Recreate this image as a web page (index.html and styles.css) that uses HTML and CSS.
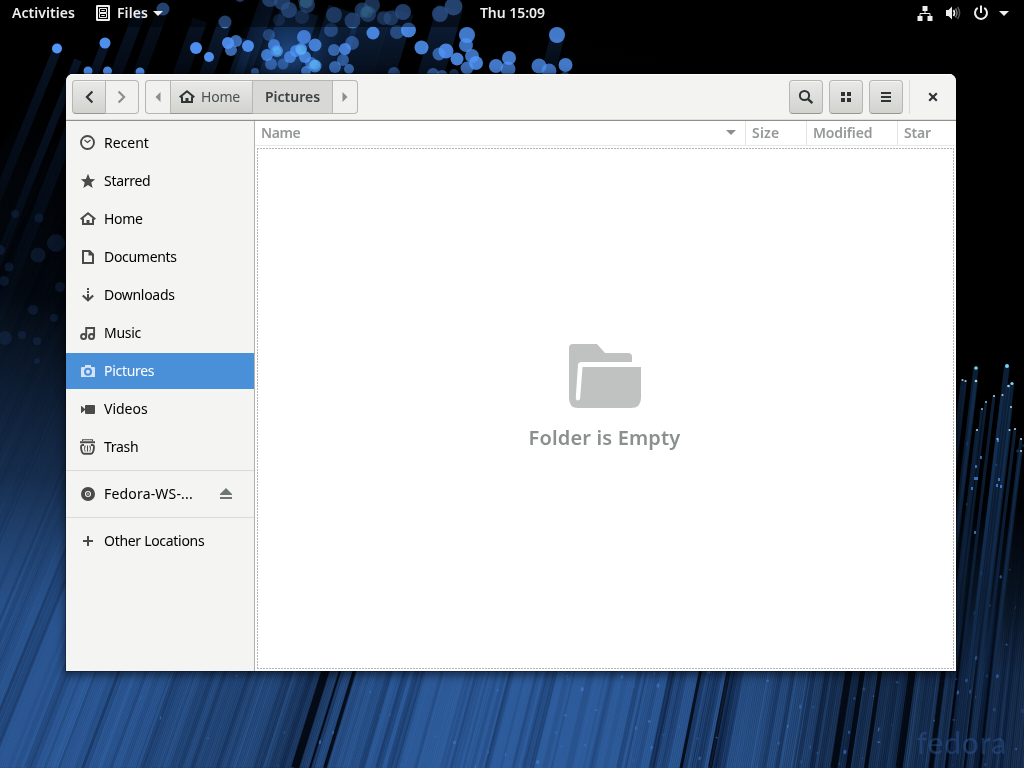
FILE: index.html
```html
<!DOCTYPE html>
<html lang="en">
<head>
<meta charset="utf-8">
<title>Files</title>
<link rel="stylesheet" href="styles.css">
</head>
<body>
<canvas class="wallpaper" id="wallpaper" width="1024" height="768"></canvas>
<span class="brand">fedora</span>

<svg class="defs" aria-hidden="true">
  <symbol id="home" viewBox="0 0 16 16"><path fill="none" stroke="currentColor" stroke-width="2" d="M.7 8.300 8 2.300l7.300 6M3 7.500V13h10V7.500"/><path fill="currentColor" d="M6.500 9h3v4.500h-3z"/></symbol>
</svg>

<header class="panel">
  <div class="panel-left">
    <span class="activities">Activities</span>
    <span class="app">
      <svg width="16" height="16" viewBox="0 0 16 16"><path fill="#eee" fill-rule="evenodd" d="M2.200 0h11.600Q15 0 15 1.200v13.600Q15 16 13.800 16H2.200Q1 16 1 14.800V1.200Q1 0 2.200 0zM3 2v12h10V2z"/><path fill="none" stroke="#eee" d="M4.500 3.500h7v4h-7zM4.500 8.500h7v4h-7zM6.500 6V5.500h3V6M6.500 11v-.5h3v.5"/></svg>
      <span class="app-name">Files</span>
      <svg class="app-arrow" width="10" height="5" viewBox="0 0 10 5"><path fill="#eee" d="M0 0h10L5 5z"/></svg>
    </span>
  </div>
  <span class="clock">Thu 15:09</span>
  <div class="status">
    <svg width="16" height="16" viewBox="0 0 16 16"><path fill="#eee" d="M5.500 1h5v5h-5zM.5 11h5v5h-5zM10.500 11h5v5h-5z"/><path fill="none" stroke="#eee" d="M8 6v3M3 11V8.500h10V11"/></svg>
    <svg width="16" height="16" viewBox="0 0 16 16"><path fill="#eee" d="M1 5h2.500L7 1.500v13L3.500 11H1z"/><path fill="none" stroke="#eee" stroke-width="1.600" d="M8.500 5q2 3 0 6"/><path fill="none" stroke="#777" stroke-width="1.500" d="M10.500 3.500q3 4.500 0 9"/><path fill="none" stroke="#555" stroke-width="1.500" d="M12.600 2q4 6 0 12"/></svg>
    <svg width="16" height="16" viewBox="0 0 16 16"><path fill="none" stroke="#eee" stroke-width="2" d="M4.700 2.900a6 6 0 1 0 6.600 0M8 .5V8"/></svg>
    <svg class="menu-arrow" width="10" height="5" viewBox="0 0 10 5"><path fill="#eee" d="M0 0h10L5 5z"/></svg>
  </div>
</header>

<main class="window">
  <header class="headerbar">
    <div class="group nav">
      <button class="btn raised"><svg width="16" height="16" viewBox="0 0 16 16"><path fill="none" stroke="#2e3436" stroke-width="2.200" d="M11.400 2.500 5.900 8l5.500 5.500"/></svg></button>
      <button class="btn flat"><svg width="16" height="16" viewBox="0 0 16 16"><path fill="none" stroke="#8b8e8f" stroke-width="2.200" d="M4.600 2.500 10.100 8l-5.500 5.500"/></svg></button>
    </div>
    <div class="group path">
      <button class="btn flat edge"><svg width="6" height="10" viewBox="0 0 6 10"><path fill="#8b8e8f" d="M5.500 0v10L.5 5z"/></svg></button>
      <button class="btn raised crumb-home"><svg width="16" height="16"><use href="#home"/></svg><span class="crumb">Home</span></button>
      <button class="btn current"><span class="crumb-bold">Pictures</span></button>
      <button class="btn flat edge"><svg width="6" height="10" viewBox="0 0 6 10"><path fill="#8b8e8f" d="M.5 0v10l5-5z"/></svg></button>
    </div>
    <div class="actions">
      <button class="btn raised single"><svg width="16" height="16" viewBox="0 0 16 16"><circle cx="6.500" cy="6.500" r="4.600" fill="none" stroke="#2e3436" stroke-width="2"/><path fill="none" stroke="#2e3436" stroke-width="2.400" d="m9.800 9.800 4.600 4.400"/></svg></button>
      <button class="btn raised single"><svg width="16" height="16" viewBox="0 0 16 16"><path fill="#2e3436" d="M3 3h4v4H3zM9 3h4v4H9zM3 9h4v4H3zM9 9h4v4H9z"/></svg></button>
      <button class="btn raised single"><svg width="16" height="16" viewBox="0 0 16 16"><path fill="#2e3436" d="M3 3h10v2H3zM3 7h10v2H3zM3 11h10v2H3z"/></svg></button>
      <i class="divider"></i>
      <button class="close"><svg width="16" height="16" viewBox="0 0 16 16"><path fill="none" stroke="#2e3436" stroke-width="2.200" d="m4.200 4.200 7.600 7.600M11.800 4.200l-7.600 7.600"/></svg></button>
    </div>
  </header>

  <div class="body">
    <nav class="sidebar">
      <a class="place"><svg width="16" height="16" viewBox="0 0 16 16"><circle cx="7.500" cy="7.500" r="6.500" fill="none" stroke="#4a4a48" stroke-width="1.900"/><path fill="none" stroke="#4a4a48" stroke-width="1.300" d="m4.500 5 3 2.500L10.500 5"/></svg><span class="wide">Recent</span></a>
      <a class="place"><svg width="16" height="16" viewBox="0 0 16 16"><path fill="#4a4a48" d="m8 .8 2.100 5.100 5.100.3-3.900 3.400L12.600 15 8 12.100 3.400 15l1.300-5.400L.8 6.200l5.100-.3z"/></svg><span>Starred</span></a>
      <a class="place"><svg width="16" height="16"><use href="#home"/></svg><span>Home</span></a>
      <a class="place"><svg width="16" height="16" viewBox="0 0 16 16"><path fill="none" stroke="#4a4a48" stroke-width="2" d="M3 2h6.500L13 5.500V14H3z"/><path fill="#4a4a48" d="M8.500 1.500V6.500H13.500L9.500 1.500z"/></svg><span>Documents</span></a>
      <a class="place"><svg width="16" height="16" viewBox="0 0 16 16"><path fill="#4a4a48" d="M7 1h2v2H7zM7 4h2v2H7zM7 7h2v5H7z"/><path fill="none" stroke="#4a4a48" stroke-width="2.200" d="m2.800 8.500 5.200 4.700 5.200-4.700"/></svg><span>Downloads</span></a>
      <a class="place"><svg width="16" height="16" viewBox="0 0 16 16"><path fill="none" stroke="#4a4a48" stroke-width="1.900" d="M6.200 11.500V3h7.900v8.500"/><circle cx="3.600" cy="11.400" r="2.500" fill="none" stroke="#4a4a48" stroke-width="2"/><circle cx="11.500" cy="11.400" r="2.500" fill="none" stroke="#4a4a48" stroke-width="2"/></svg><span>Music</span></a>
      <a class="place selected"><svg width="16" height="16" viewBox="0 0 16 16"><path fill="#d3e3f5" d="M5 2h6v2h3q1 0 1 1v9H1V5q0-1 1-1h3z"/><circle cx="8" cy="8.800" r="3" fill="none" stroke="#4a90d9" stroke-width="2"/></svg><span>Pictures</span></a>
      <a class="place"><svg width="16" height="16" viewBox="0 0 16 16"><path fill="#4a4a48" d="M6 4h8q1 0 1 1v7q0 1-1 1H6q-1 0-1-1V9l-3.500 3H1V5h.5L5 8V5q0-1 1-1z"/></svg><span class="wide">Videos</span></a>
      <a class="place"><svg width="16" height="16" viewBox="0 0 16 16"><path fill="none" stroke="#4a4a48" stroke-width="1.900" d="M0 3.200h15M1.500 6Q.4 9 2 13q.6 1.800 2 1.800h7q1.400 0 2-1.800 1.600-4 .5-7M1.500 6H4M11 6h2.500"/><path fill="none" stroke="#4a4a48" stroke-width="1.100" d="M2.500 2V.8h10V2M5.200 6.500q-1.400 3 0 6M9.800 6.500q1.400 3 0 6M7.500 6.500v6"/></svg><span>Trash</span></a>
      <hr class="rule">
      <a class="place"><svg width="16" height="16" viewBox="0 0 16 16"><circle cx="8" cy="8" r="7" fill="#4a4a48"/><circle cx="8" cy="8" r="2.500" fill="none" stroke="#f4f4f2" stroke-width="1.100"/><circle cx="8" cy="8" r=".8" fill="#f4f4f2"/></svg><span class="disc">Fedora-WS-...</span><svg class="eject" width="16" height="16" viewBox="0 0 16 16"><path fill="#6f7474" d="M8 2 14 8v1H2V8zM2 11h12v2H2z"/></svg></a>
      <hr class="rule">
      <a class="place"><svg width="16" height="16" viewBox="0 0 16 16"><path fill="#4a4a48" d="M7 3h2v4h4v2H9v4H7V9H3V7h4z"/></svg><span>Other Locations</span></a>
    </nav>

    <section class="content">
      <div class="columns">
        <div class="col name"><span>Name</span><svg width="10" height="5" viewBox="0 0 10 5"><path fill="#8b8e8f" d="M0 0h10L5 5z"/></svg></div>
        <div class="col size"><span>Size</span></div>
        <div class="col modified"><span>Modified</span></div>
        <div class="col star"><span>Star</span></div>
      </div>
      <div class="view">
        <svg width="72" height="64" viewBox="0 0 72 64"><path fill="#c0c2c1" d="M4 0h24l8 9h23q4 0 4 4v5H13q-4 0-4 3L6.800 53.500q0 3 2.100 3t2.300-3L13.500 23H72v31q0 10-10 10H9Q0 64 0 54V4q0-4 4-4z"/></svg>
        <p class="empty">Folder is Empty</p>
      </div>
    </section>
  </div>
</main>
<script src="wallpaper.js"></script>
</body>
</html>
```
FILE: styles.css
```css
* { box-sizing: border-box; }
body {
  margin: 0;
  width: 1024px;
  height: 768px;
  overflow: hidden;
  background: #000;
  font-family: "Noto Sans", "Open Sans", sans-serif;
  font-size: 14px;
  color: #000;
}
svg { display: block; flex: none; }
.defs { position: absolute; width: 0; height: 0; }
.wallpaper { position: absolute; top: 0; left: 0; z-index: -2; }
.brand {
  position: absolute;
  right: 17px;
  bottom: 9px;
  z-index: -1;
  font: 500 30px/34px "Lato", sans-serif;
  letter-spacing: 0.8px;
  color: rgba(44, 84, 146, 0.5);
}

/* Top panel */
.panel {
  display: grid;
  grid-template-columns: 1fr auto 1fr;
  align-items: center;
  height: 27px;
  padding: 0 15px 1px 16px;
  background: rgba(0, 0, 0, 0.45);
  color: #eee;
  font-weight: 600;
}
.panel span { padding-bottom: 1px; }
.panel .app { padding: 0; }
.panel-left, .app, .status { display: flex; align-items: center; }
.panel-left { gap: 20px; margin-left: -4px; }
.app { gap: 6px; }
.app-arrow { margin-left: -1px; }
.activities { letter-spacing: 0.05px; }
.app-name { letter-spacing: 0.1px; }
.clock { letter-spacing: -0.03px; }
.status { justify-content: flex-end; gap: 12px; }
.menu-arrow { margin-left: -2px; }

/* Window */
.window {
  width: 890px;
  height: 597px;
  margin: 47px 0 0 66px;
  border-radius: 7px 7px 0 0;
  overflow: hidden;
  background: #fff;
  box-shadow: 0 3px 10px 1px rgba(0, 0, 0, 0.55), 0 0 0 1px rgba(0, 0, 0, 0.25);
}
.headerbar {
  display: flex;
  height: 47px;
  padding: 6px 15px 0 6px;
  gap: 6px;
  border-bottom: 1px solid #8f908a;
  background: #f3f3f2;
  box-shadow: inset 0 1px #fff, inset 0 -1px #dededc;
}
.btn {
  display: flex;
  align-items: center;
  justify-content: center;
  height: 34px;
  padding: 0;
  border: 1px solid #b6b6b3;
  font: inherit;
  color: #2e3436;
}
.btn span { padding-bottom: 2px; }
.raised {
  background: linear-gradient(#e9e9e7, #d2d2cf);
  border-bottom-color: #97978f;
  box-shadow: inset 0 1px #f6f6f5;
}
.flat { background: #f1f1f0; }
.current { width: 81px; margin-left: -1px; background: #d8d8d6; }
.group { display: flex; height: 34px; }
.group .btn:first-child { border-radius: 4px 0 0 4px; }
.group .btn:last-child { border-radius: 0 4px 4px 0; }
.nav .btn { width: 34px; }
.nav .flat { width: 33px; border-left: 0; }
.edge:first-child { border-right: 0; width: 25px; }
.edge:last-child { border-left: 0; width: 25px; }
.crumb-home { width: 83px; padding-left: 8px; gap: 6px; justify-content: flex-start; }
.crumb { color: #4b5052; letter-spacing: -0.2px; }
.crumb-bold { font-weight: 600; color: #3c4143; }
.actions { display: flex; gap: 6px; margin-left: auto; }
.single { width: 34px; border-radius: 4px; }
.divider { width: 1px; height: 34px; background: #dadad8; }
.close {
  display: flex;
  align-items: center;
  height: 34px;
  margin-left: 9px;
  padding: 0;
  border: 0;
  background: none;
}

.body { display: flex; height: 550px; }

/* Sidebar */
.sidebar {
  width: 189px;
  padding-top: 4px;
  border-right: 1px solid #b2b2ae;
  background: #f4f4f2;
}
.place {
  display: flex;
  align-items: center;
  gap: 8px;
  height: 36px;
  margin-bottom: 2px;
  padding: 0 20px 0 14px;
}
.place svg { color: #4a4a48; }
.place span { padding-bottom: 2px; white-space: nowrap; letter-spacing: -0.3px; }
.place .wide { letter-spacing: 0; }
.place .disc { letter-spacing: 0.18px; }
.selected { background: #4a90d9; color: #fff; }
.eject { margin-left: auto; }
.rule {
  height: 1px;
  margin: 5px 0;
  border: 0;
  background: #dadad8;
}

/* Content */
.content { flex: 1; display: flex; flex-direction: column; }
.columns {
  display: flex;
  height: 25px;
  border-bottom: 1px solid #e9e9e8;
  color: #959898;
  font-weight: 600;
}
.col {
  display: flex;
  align-items: center;
  padding: 0 6px 1px;
  border-right: 1px solid #e3e3e2;
  letter-spacing: -0.15px;
}
.name { width: 491px; justify-content: space-between; padding-right: 9px; letter-spacing: -0.4px; }
.size { width: 61px; letter-spacing: 0.2px; }
.modified { width: 91px; }
.star { border-right: 0; }
.view {
  flex: 1;
  display: flex;
  flex-direction: column;
  align-items: center;
  margin: 2px;
  padding: 196px 2px 0 0;
  background:
    repeating-linear-gradient(90deg, #b4b4b2 0 2px, #fff 2px 3px) top / 100% 1px no-repeat,
    repeating-linear-gradient(90deg, #b4b4b2 0 2px, #fff 2px 3px) bottom / 100% 1px no-repeat,
    repeating-linear-gradient(#b4b4b2 0 2px, #fff 2px 3px) left / 1px 100% no-repeat,
    repeating-linear-gradient(#b4b4b2 0 2px, #fff 2px 3px) right / 1px 100% no-repeat;
}
.empty {
  margin: 16px 0 0;
  font-size: 20px;
  line-height: 28px;
  font-weight: 600;
  letter-spacing: 0.15px;
  color: #8b8f8f;
}
```
FILE: wallpaper.js
```javascript
const canvas = document.getElementById('wallpaper');
const ctx = canvas.getContext('2d');
let seed = 77;
const rnd = () => (seed = (seed * 16807) % 2147483647) / 2147483647;

// Piecewise linear lookup over [x, value] stops.
function lerp(stops, x) {
  for (let i = 1; i < stops.length; i++) {
    const [x0, a] = stops[i - 1], [x1, b] = stops[i];
    if (x <= x1) return a + (b - a) * Math.max(0, x - x0) / (x1 - x0);
  }
  return stops[stops.length - 1][1];
}
const glow = [[-60, .75], [20, .85], [100, .85], [170, .65], [250, .58], [300, .42], [320, .65], [370, .9], [540, 1], [600, .95], [690, .75], [780, .62], [830, .36], [930, .36], [1024, .32]];
const slope = x => 0.4 - 0.3 * x / 1024;
const start = [[-300, 60], [-60, 130], [60, 130], [300, 20], [520, 60], [700, 380], [1024, 400]];

function fiber(x, top, width, r, g, b, alpha) {
  const k = slope(x), h = 768 - top;
  const grad = ctx.createLinearGradient(0, top, 0, 768);
  grad.addColorStop(0, `rgba(${r},${g},${b},0)`);
  grad.addColorStop(.3, `rgba(${r},${g},${b},${alpha * .07})`);
  grad.addColorStop(.55, `rgba(${r},${g},${b},${alpha * .38})`);
  grad.addColorStop(.75, `rgba(${r},${g},${b},${alpha * .9})`);
  grad.addColorStop(1, `rgba(${r},${g},${b},${alpha})`);
  ctx.strokeStyle = grad;
  ctx.lineWidth = width;
  ctx.beginPath();
  ctx.moveTo(x + k * h, top);
  ctx.lineTo(x, 768);
  ctx.stroke();
}
ctx.fillStyle = '#000';
ctx.fillRect(0, 0, 1024, 768);

// Base sheet of light, brightest across the bottom centre.
ctx.filter = 'blur(.7px)';
for (let x = -300; x < 1030; x += 2) {
  fiber(x, lerp(start, x), 3.5, 46, 92, 156, lerp(glow, x));
}
for (let i = 0; i < 230; i++) {
  const x = -250 + rnd() * 1280;
  fiber(x, lerp(start, x) + rnd() * 60, 1 + rnd() * 6, 3, 14, 38, .04 + rnd() * (x > 650 ? .36 : .17));
}
for (const [x, w] of [[295, 8], [325, 4], [310, 2], [681, 3], [710, 4], [834, 7], [848, 5], [866, 4], [899, 7], [931, 5], [946, 3], [965, 3], [980, 3]]) {
  fiber(x, lerp(start, x), w, 0, 2, 8, .85);
}
ctx.filter = 'none';
for (let i = 0; i < 150; i++) {
  const x = -250 + rnd() * 1280;
  fiber(x, lerp(start, x) + rnd() * 150, .5 + rnd() * 1.1, 58, 110, 180, .06 + rnd() * .22);
}

// Glints scattered along the fibres.
for (let i = 0; i < 230; i++) {
  const x = Math.sqrt(rnd()) * 1024, y = 440 + rnd() * 328;
  ctx.fillStyle = `rgba(72,138,225,${.1 + rnd() * .5})`;
  ctx.beginPath();
  ctx.ellipse(x, y, .5 + rnd() * 1.2, .7 + rnd() * 1.6, .2, 0, 7);
  ctx.fill();
}
for (const [x, y, r] of [[15, 214, 4], [39, 218, 4.5], [0, 250, 5], [38, 255, 7.5], [56, 243, 9], [4, 281, 5], [60, 287, 5], [9, 267, 4.5], [5, 338, 7], [37, 361, 3], [37, 341, 4], [33, 310, 5], [54, 318, 4], [22, 335, 4]]) {
  ctx.fillStyle = 'rgba(30,62,108,.3)';
  ctx.beginPath(); ctx.arc(x, y, r, 0, 7); ctx.fill();
}

// Upper stems trailing from the soft dots.
function stem(x, y, w, len, alpha) {
  const k = .42 - x / 1024 * .3;
  const grad = ctx.createLinearGradient(0, y, 0, y + len);
  grad.addColorStop(0, `rgba(22,52,98,${alpha})`);
  grad.addColorStop(1, 'rgba(20,50,95,0)');
  ctx.strokeStyle = grad; ctx.lineWidth = w;
  ctx.beginPath(); ctx.moveTo(x, y); ctx.lineTo(x - k * len, y + len); ctx.stroke();
}
[[57, 50, 9, 230, .35], [78, 60, 8, 260, .4], [92, 75, 12, 280, .3], [105, 45, 9, 120, .4], [139, 14, 12, 160, .35], [163, 9, 12, 160, .3], [200, 20, 15, 120, .35], [225, 22, 14, 120, .5], [248, 40, 14, 90, .5], [268, 0, 16, 140, .5], [300, 10, 38, 120, .6], [345, 10, 34, 120, .65], [375, 10, 34, 120, .65], [403, 12, 22, 110, .6], [450, 8, 26, 130, .6], [557, 38, 14, 60, .4]].forEach(s => stem(...s));
const halo = ctx.createRadialGradient(290, 52, 5, 290, 52, 55);
halo.addColorStop(0, 'rgba(50,120,210,.45)');
halo.addColorStop(1, 'rgba(30,80,160,0)');
ctx.fillStyle = halo;
ctx.fillRect(230, 0, 120, 120);

// x, y, radius, opacity
const dots = [
  [57,48.5,5,1],[105,43,5.5,.95],[88,71,4.5,.9],[107.5,71,4.5,.9],[140,72,4.5,.9],[196,48,6,.95],[209,57,5,.95],[225,22,6.5,.8],[228,43,6,.9],[236,41,6,.7],[231,50,6,.7],[248,46,6,.9],[163,9,6.5,.8],[139,14,5.5,.25],[240,-3,5,.7],
  [269,35,6,.35],[274,45,6,.7],[277,51,6,.8],[267,55,6,.75],[271,64,6,.5],[283,64,5.5,.4],[279,20,6,.3],[290,57,6,.7],[296,51,6,.75],[301,49,6,.8],[304,37,7,.75],[305,57,6,.8],[315,45,6.5,.8],[311,63,6,.6],[315,66,6.5,.8],[306,71,5,.7],[335,67,6,.6],[255,72,4,.5],
  [270,-1,8,.7],[282,2,8,.7],[289,10,8,.7],[307,5,8,.6],[302,17,7,.35],[306,0,8,.5],[334,15,8,.6],[331,30,7,.35],[334,50,6,.6],
  [352.5,20.6,8,.65],[362,10,7.5,.6],[368,14,8,.6],[372,5,8,.6],[384,18,7,.5],[391,18,7.5,.6],[403,12,8,.75],[440,14,8,.8],[453.5,6.5,9,.8],[373,33,6.5,.85],[397,32,7,.4],[408.5,30,7.5,.85],[421.5,47.5,7,.85],[439,54,6.5,.6],[446,51,7.5,.85],[457,59,6.5,.85],[467,35,8,.8],[466,45,7,.75],[472,56,7,.75],[476,63,7,.85],[467,68,6.5,.7],[496,66,7,.8],[509,58,7,.8],[508,69,7.5,.7],[557,35,8,.8],[539,66,7.5,.75],[549,71,7.5,.7],[565.5,65,7,.8],[352,43,7,.45],[345,49,6,.8],[343,60,6,.5],[349,69,5,.6],[394,73,6,.4],[433,74,6,.5],[442,76,6,.5],[454,74,5,.3],[565,78,6,.5]];
for (const [x, y, r, a] of dots) {
  ctx.fillStyle = `rgba(82,150,250,${a})`;
  ctx.beginPath(); ctx.arc(x, y, r, 0, 7); ctx.fill();
}
for (const [x, y, r] of [[301, 50, 5], [315, 65, 5], [277, 51, 4], [367, 12, 6], [306, 2, 6]]) {
  ctx.fillStyle = 'rgba(100,220,240,.35)';
  ctx.beginPath(); ctx.arc(x, y, r, 0, 7); ctx.fill();
}

// Sharp fibres on the right edge, each with a bright tip.
const tips = [[976,368,2],[1007,366,2.2],[962.5,380,1.2],[965.5,381,1.2],[976,381,1.5],[1012,383.5,1.8],[1008.5,386,1.5],[982,409,1],[986,402,1],[994,396,1.2],[1002.5,395,1.2],[1011,407,1.2],[977,430,1.2],[1015,429,1.2],[1009.5,430,1.2],[1021,439,1.2],[1021,451,1.2],[997.5,439,1.2]];
ctx.save();
ctx.beginPath(); ctx.rect(956, 340, 68, 428); ctx.clip();
for (const [x, y, r] of tips) {
  const g = ctx.createLinearGradient(0, y, 0, y + 330);
  g.addColorStop(0, 'rgba(20,52,90,.6)');
  g.addColorStop(.5, 'rgba(20,48,86,.5)');
  g.addColorStop(1, 'rgba(20,50,90,0)');
  ctx.strokeStyle = g; ctx.lineWidth = r * 2.6;
  ctx.beginPath(); ctx.moveTo(x, y); ctx.lineTo(x - 40, y + 330); ctx.stroke();
  ctx.fillStyle = r > 1.7 ? '#79d4f2' : '#a9cfe0';
  ctx.beginPath(); ctx.arc(x, y, r * .9, 0, 7); ctx.fill();
}
for (const [x, y] of [[974, 477], [976, 477], [998, 478], [1000, 485], [996, 484], [975, 465], [980, 456], [971, 487], [974, 531], [997, 439]]) {
  ctx.fillStyle = 'rgba(80,150,240,.7)';
  ctx.fillRect(x, y, 2, 3);
}
ctx.restore();
```
